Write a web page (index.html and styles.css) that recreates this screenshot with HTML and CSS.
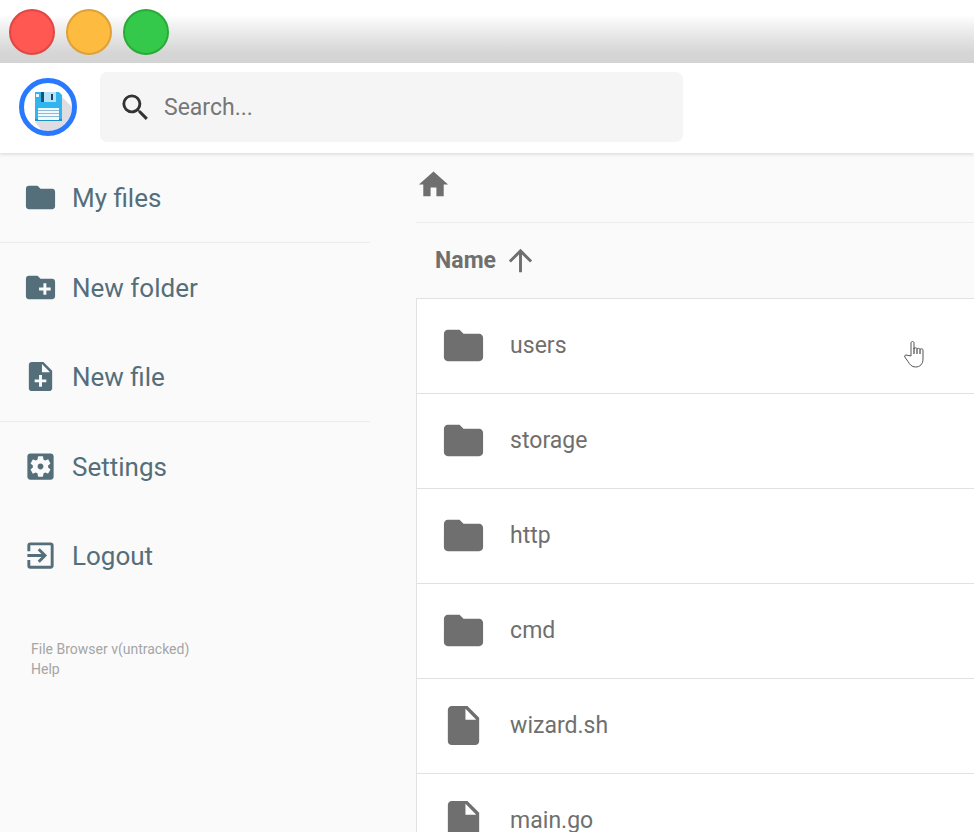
FILE: index.html
```html
<!DOCTYPE html>
<html lang="en">
<head>
<meta charset="utf-8">
<title>File Browser</title>
<link rel="stylesheet" href="styles.css">
</head>
<body>
<div class="titlebar">
  <span class="light light-close"></span>
  <span class="light light-minimize"></span>
  <span class="light light-zoom"></span>
</div>
<header class="header">
  <svg class="logo" viewBox="0 0 60 60" aria-hidden="true">
    <circle cx="30" cy="30" r="26.5" fill="#fff"/>
    <path d="M42 18 54 30A24.500 24.500 0 0 1 24 53.500L17 45Z" fill="#dfdce2"/>
    <path d="M17 15h24l3 3v26H17Z" fill="#30b5ee"/>
    <path d="M17 42h27v2H17Z" fill="#1b91c9"/>
    <path d="M23 15h15v10H23Z" fill="#b7e3f8"/>
    <path d="M23 15h3v10h-3Z" fill="#145478"/>
    <path d="M33 17h2v6h-2Z" fill="#23415b"/>
    <path d="M18 17h3v3h-3Z" fill="#e5f8ff"/>
    <path d="M20 31h21v12H20Z" fill="#eefaff"/>
    <path d="M20 33.500h21M20 36.500h21M20 39.500h21" stroke="#8db9d2" stroke-width="1"/>
    <circle cx="30" cy="30" r="26.500" fill="none" stroke="#2979ff" stroke-width="5"/>
  </svg>
  <label class="search">
    <svg class="icon" viewBox="0 0 24 24" aria-hidden="true"><path d="M15.500 14h-.79l-.28-.27A6.471 6.471 0 0 0 16 9.500 6.500 6.500 0 1 0 9.500 16c1.610 0 3.090-.59 4.230-1.570l.27.28v.79l5 4.990L20.490 19l-4.990-5zm-6 0C7.010 14 5 11.990 5 9.500S7.010 5 9.500 5 14 7.010 14 9.500 11.990 14 9.500 14z"/></svg>
    <input type="text" placeholder="Search..." aria-label="Search">
  </label>
</header>
<div class="layout">
  <nav class="sidebar">
    <div class="group">
      <button class="action" type="button"><svg class="icon" viewBox="0 0 24 24" aria-hidden="true"><path d="M10 4H4c-1.100 0-1.990.9-1.990 2L2 18c0 1.100.9 2 2 2h16c1.100 0 2-.9 2-2V8c0-1.100-.9-2-2-2h-8l-2-2z"/></svg>My files</button>
    </div>
    <div class="group">
      <button class="action" type="button"><svg class="icon" viewBox="0 0 24 24" aria-hidden="true"><path d="M20 6h-8l-2-2H4c-1.110 0-1.990.89-1.990 2L2 18c0 1.110.89 2 2 2h16c1.110 0 2-.89 2-2V8c0-1.110-.89-2-2-2zm-1 8h-3v3h-2v-3h-3v-2h3V9h2v3h3v2z"/></svg>New folder</button>
      <button class="action" type="button"><svg class="icon" viewBox="0 0 24 24" aria-hidden="true"><path d="M14 2H6c-1.100 0-1.990.9-1.990 2L4 20c0 1.100.89 2 1.990 2H18c1.100 0 2-.9 2-2V8l-6-6zm2 14h-3v3h-2v-3H8v-2h3v-3h2v3h3v2zm-3-7V3.500L18.500 9H13z"/></svg>New file</button>
    </div>
    <div class="group">
      <button class="action" type="button"><svg class="icon" viewBox="0 0 24 24" aria-hidden="true"><path d="M12 10c-1.100 0-2 .9-2 2s.9 2 2 2 2-.9 2-2-.9-2-2-2zm7-7H5c-1.110 0-2 .9-2 2v14c0 1.100.89 2 2 2h14c1.110 0 2-.9 2-2V5c0-1.100-.89-2-2-2zm-1.750 9c0 .23-.02.46-.05.68l1.480 1.160c.13.11.17.3.08.45l-1.400 2.420c-.09.15-.27.21-.43.15l-1.740-.7c-.36.28-.76.51-1.180.69l-.26 1.850c-.03.17-.18.3-.35.3h-2.800c-.17 0-.32-.13-.35-.29l-.26-1.850c-.43-.18-.82-.41-1.180-.69l-1.740.7c-.16.06-.34 0-.43-.15l-1.400-2.420c-.09-.15-.05-.34.08-.45l1.480-1.160c-.03-.23-.05-.46-.05-.69s.02-.46.05-.68l-1.480-1.160c-.13-.11-.17-.3-.08-.45l1.400-2.420c.09-.15.27-.21.43-.15l1.740.7c.36-.28.76-.51 1.180-.69l.26-1.850c.03-.17.18-.3.35-.3h2.800c.17 0 .32.13.35.29l.26 1.850c.43.18.82.41 1.180.69l1.740-.7c.16-.06.34 0 .43.15l1.400 2.420c.09.15.05.34-.08.45l-1.480 1.160c.03.23.05.46.05.69z"/></svg>Settings</button>
      <button class="action" type="button"><svg class="icon" viewBox="0 0 24 24" aria-hidden="true"><path d="M10.090 15.590 11.500 17l5-5-5-5-1.410 1.410L12.670 11H3v2h9.670l-2.580 2.590zM19 3H5a2 2 0 0 0-2 2v4h2V5h14v14H5v-4H3v4a2 2 0 0 0 2 2h14c1.100 0 2-.9 2-2V5c0-1.100-.9-2-2-2z"/></svg>Logout</button>
    </div>
    <p class="credits"><span>File Browser v(untracked)</span><a href="#help">Help</a></p>
  </nav>
  <main class="main">
    <div class="breadcrumbs">
      <a href="#home" aria-label="Home"><svg class="icon" viewBox="0 0 24 24" aria-hidden="true"><path d="M10 20v-6h4v6h5v-8h3L12 3 2 12h3v8z"/></svg></a>
    </div>
    <div class="columns">
      <button class="sort" type="button">Name<svg class="icon" viewBox="0 0 24 24" aria-hidden="true"><path d="m4 12 1.410 1.410L11 7.830V20h2V7.830l5.580 5.590L20 12l-8-8-8 8z"/></svg></button>
    </div>
    <ul class="files">
      <li><a href="#users"><svg class="icon" viewBox="0 0 24 24" aria-hidden="true"><path d="M10 4H4c-1.100 0-1.990.9-1.990 2L2 18c0 1.100.9 2 2 2h16c1.100 0 2-.9 2-2V8c0-1.100-.9-2-2-2h-8l-2-2z"/></svg>users</a></li>
      <li><a href="#storage"><svg class="icon" viewBox="0 0 24 24" aria-hidden="true"><path d="M10 4H4c-1.100 0-1.990.9-1.990 2L2 18c0 1.100.9 2 2 2h16c1.100 0 2-.9 2-2V8c0-1.100-.9-2-2-2h-8l-2-2z"/></svg>storage</a></li>
      <li><a href="#http"><svg class="icon" viewBox="0 0 24 24" aria-hidden="true"><path d="M10 4H4c-1.100 0-1.990.9-1.990 2L2 18c0 1.100.9 2 2 2h16c1.100 0 2-.9 2-2V8c0-1.100-.9-2-2-2h-8l-2-2z"/></svg>http</a></li>
      <li><a href="#cmd"><svg class="icon" viewBox="0 0 24 24" aria-hidden="true"><path d="M10 4H4c-1.100 0-1.990.9-1.990 2L2 18c0 1.100.9 2 2 2h16c1.100 0 2-.9 2-2V8c0-1.100-.9-2-2-2h-8l-2-2z"/></svg>cmd</a></li>
      <li><a href="#wizard"><svg class="icon" viewBox="0 0 24 24" aria-hidden="true"><path d="M6 2c-1.100 0-1.990.9-1.990 2L4 20c0 1.100.89 2 1.990 2H18c1.100 0 2-.9 2-2V8l-6-6H6zm7 7V3.500L18.500 9H13z"/></svg>wizard.sh</a></li>
      <li><a href="#main"><svg class="icon" viewBox="0 0 24 24" aria-hidden="true"><path d="M6 2c-1.100 0-1.990.9-1.990 2L4 20c0 1.100.89 2 1.990 2H18c1.100 0 2-.9 2-2V8l-6-6H6zm7 7V3.500L18.500 9H13z"/></svg>main.go</a></li>
    </ul>
  </main>
</div>
<svg class="pointer" viewBox="0 0 20 28" aria-hidden="true">
  <path d="M7 16V3c0-2 3-2 3 0v5.500c0-1 3-1 3 .5 0-1 3-1 3 .5 0-1 3-1 3 .5v9c0 5-3 8-7.500 8-4 0-6-3-7.500-5.500L.800 17c-.8-1.500 1-2.500 2.200-1.800Z" fill="#fff" stroke="#555" stroke-width="1"/>
  <path d="M10 8v6M13 9v5M16 9.500v4.500" fill="none" stroke="#222" stroke-width="1"/>
</svg>
</body>
</html>
```
FILE: styles.css
```css
* {
  box-sizing: border-box;
}

body {
  position: relative;
  display: flex;
  flex-direction: column;
  height: 100vh;
  margin: 0;
  overflow: hidden;
  background: #fafafa;
  color: #6f6f6f;
  font-family: Roboto, "Liberation Sans", sans-serif;
  font-size: 23px;
}

button {
  border: 0;
  padding: 0;
  background: none;
  color: inherit;
  font: inherit;
  text-align: left;
}

a {
  color: inherit;
  text-decoration: none;
}

.icon {
  flex: none;
  display: block;
  width: 35px;
  height: 35px;
  fill: currentColor;
}

.titlebar {
  flex: none;
  display: flex;
  align-items: center;
  gap: 11px;
  height: 63px;
  padding: 0 9px;
  background: linear-gradient(#fff 15px, #f1f1f1 26px, #d6d6d6 52px, #d3d3d3);
}

.light {
  width: 46px;
  height: 46px;
  border: 2px solid;
  border-radius: 50%;
}

.light-close {
  background: #ff5752;
  border-color: #df4744;
}

.light-minimize {
  background: #fdbc40;
  border-color: #dea038;
}

.light-zoom {
  background: #35c94b;
  border-color: #28ab38;
}

.header {
  z-index: 1;
  flex: none;
  display: flex;
  align-items: center;
  gap: 22px;
  height: 90px;
  padding: 0 0 2px 18px;
  background: #fff;
  box-shadow: 0 2px 3px rgba(0, 0, 0, 0.1);
}

.logo {
  flex: none;
  width: 60px;
  height: 60px;
}

.search {
  display: flex;
  align-items: center;
  gap: 11px;
  width: 61%;
  flex: none;
  height: 70px;
  padding: 0 18px;
  border-radius: 7px;
  background: #f5f5f5;
  color: #333;
}

.search input {
  flex: 1;
  min-width: 0;
  border: 0;
  padding: 0;
  background: none;
  font: inherit;
  outline: 0;
}

.search input::placeholder {
  color: #777;
  opacity: 1;
}

.layout {
  flex: 1;
  min-height: 0;
  display: grid;
  grid-template-columns: 38% 1fr;
  column-gap: 46px;
}

.sidebar {
  color: #546e7a;
  font-size: 26px;
}

.group + .group {
  border-top: 1px solid #ececec;
}

.action {
  display: flex;
  align-items: center;
  gap: 14px;
  width: 100%;
  height: 89px;
  padding: 0 23px;
}

.credits {
  display: flex;
  flex-direction: column;
  margin: 39px 31px;
  color: #a5a5a5;
  font-size: 14px;
  line-height: 20px;
}

.breadcrumbs {
  display: flex;
  align-items: center;
  height: 70px;
  padding-bottom: 6px;
  border-bottom: 1px solid #ececec;
}

.columns {
  display: flex;
  height: 75px;
  padding-left: 19px;
}

.sort {
  display: flex;
  align-items: center;
  gap: 7px;
  font-weight: 700;
}

.files {
  margin: 0;
  padding: 0;
  border: solid #e1e1e1;
  border-width: 1px 0 0 1px;
  background: #fff;
  list-style: none;
}

.files li {
  border-bottom: 1px solid #e1e1e1;
}

.files a {
  display: flex;
  align-items: center;
  gap: 23px;
  height: 94px;
  padding: 0 23px 1px;
}

.files .icon {
  width: 47px;
  height: 47px;
}

.pointer {
  position: absolute;
  z-index: 2;
  top: 340px;
  right: 50px;
  width: 20px;
  height: 28px;
}
```
